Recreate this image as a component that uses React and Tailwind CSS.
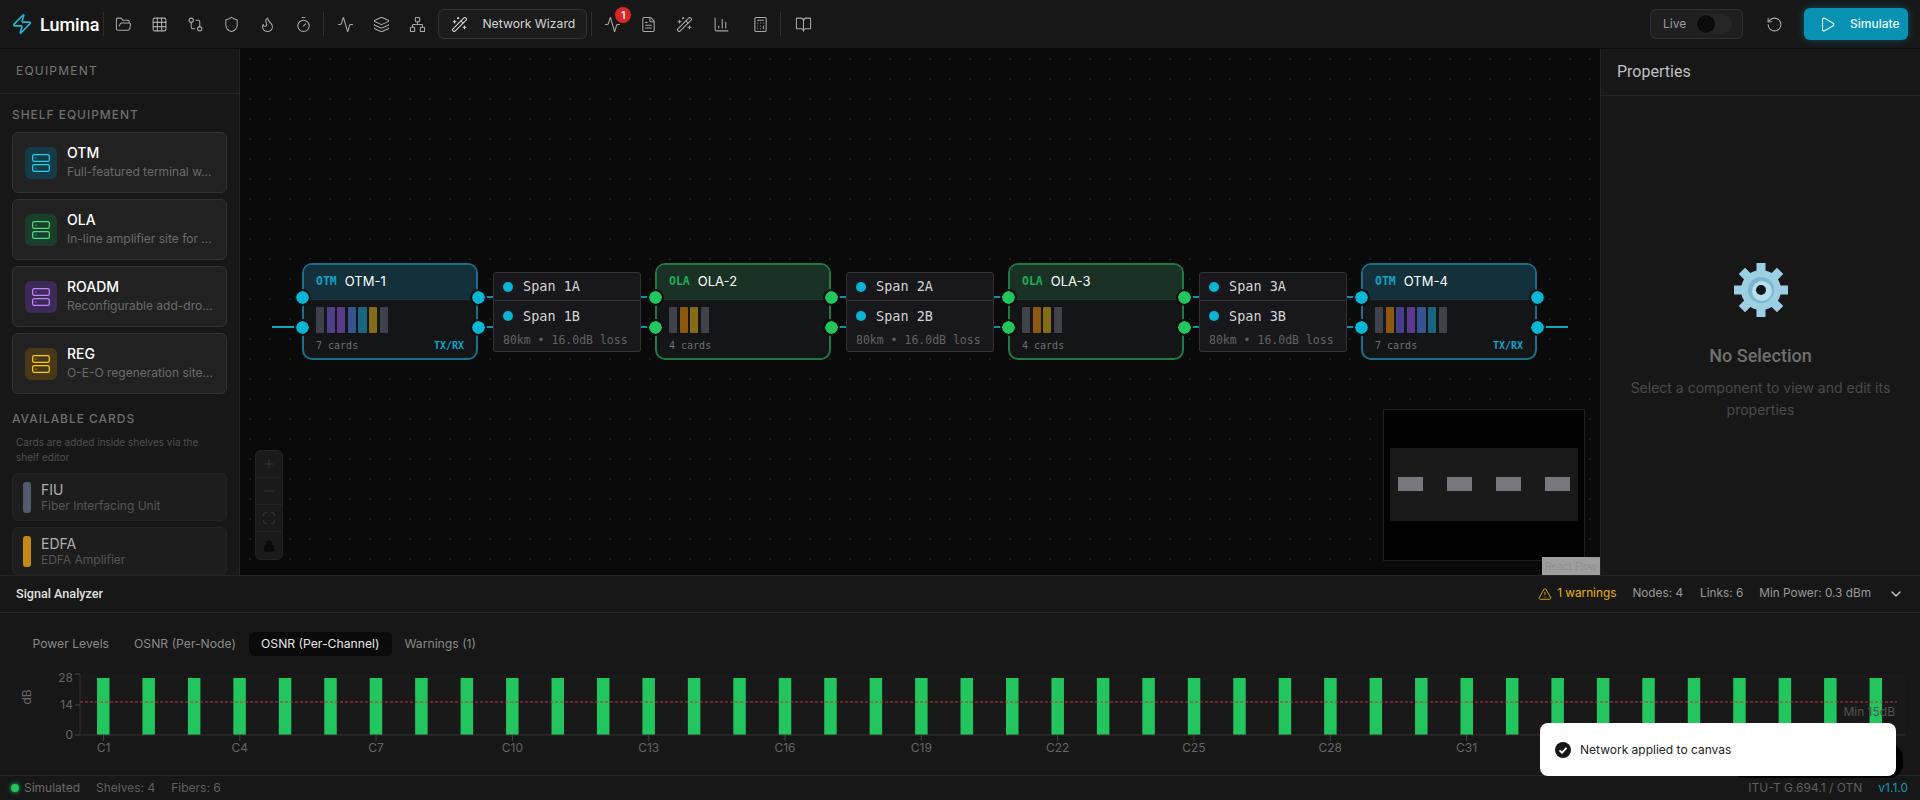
import {
  FolderOpen, Grid3x3, GitCompare, Shield, Flame, Timer, Activity, Layers, Network, WandSparkles,
  FileText, ChartColumn, Calculator, BookOpen, RotateCcw, Play, Server, TriangleAlert, ChevronDown,
  Plus, Minus, Maximize, Lock, Zap,
} from "lucide-react";

const head = { fontFamily: "Roboto, sans-serif" };
const mono = { fontFamily: "'DejaVu Sans Mono', monospace" };

const shelves = [
  { title: "OTM", desc: "Full-featured terminal w...", box: "bg-[#153b47]", icon: "text-[#22d3ee]" },
  { title: "OLA", desc: "In-line amplifier site for ...", box: "bg-[#1a3d2c]", icon: "text-[#4ade80]" },
  { title: "ROADM", desc: "Reconfigurable add-dro...", box: "bg-[#3d2a58]", icon: "text-[#c084fc]" },
  { title: "REG", desc: "O-E-O regeneration site...", box: "bg-[#483719]", icon: "text-[#facc15]" },
];

const GREY = "#474a55";
const nodes = [
  { x: 62, kind: "OTM", name: "OTM-1", cards: [GREY, "#5a479f", "#69409f", "#3e5da7", "#1a7690", "#9c7a17", GREY], foot: true },
  { x: 415, kind: "OLA", name: "OLA-2", cards: [GREY, "#a3650f", "#9c7a17", GREY] },
  { x: 768, kind: "OLA", name: "OLA-3", cards: [GREY, "#a3650f", "#9c7a17", GREY] },
  { x: 1121, kind: "OTM", name: "OTM-4", cards: [GREY, "#a3650f", "#4c47a3", "#69409f", "#3e5da7", "#1a7690", GREY], foot: true },
];

const spans = [
  { x: 253, a: "Span 1A", b: "Span 1B" },
  { x: 606, a: "Span 2A", b: "Span 2B" },
  { x: 959, a: "Span 3A", b: "Span 3B" },
];

const wireStarts = [244, 401, 597, 754, 950, 1107];

function TopIcon({ icon: Icon, x }) {
  return (
    <button className={`flex h-8 w-9 items-center justify-center text-[#a8a8a8] ${x || ""}`}>
      <Icon size={17} strokeWidth={1.5} />
    </button>
  );
}

function Sep({ m }) {
  return <div className={`h-6 w-px bg-[#2e2e2e] ${m}`} />;
}

function Header() {
  return (
    <header className="flex h-12 shrink-0 items-center bg-[#171717] pl-[11px] pr-[12px]">
      <Zap size={22} strokeWidth={1.75} className="text-[#22b8d6]" />
      <span className="ml-[7px] text-[18px] font-medium text-white" style={head}>Lumina</span>
      <Sep m="ml-[4px]" />
      <div className="ml-[1px] flex">
        <TopIcon icon={FolderOpen} />
        <TopIcon icon={Grid3x3} />
        <TopIcon icon={GitCompare} />
        <TopIcon icon={Shield} />
        <TopIcon icon={Flame} />
        <TopIcon icon={Timer} />
      </div>
      <Sep m="ml-[2px]" />
      <div className="ml-[3px] flex">
        <TopIcon icon={Activity} />
        <TopIcon icon={Layers} />
        <TopIcon icon={Network} />
      </div>
      <button className="ml-[3px] flex h-[30px] w-[149px] items-center gap-[14px] rounded-md border border-[#333] bg-[#1c1c1c] pl-[12px] text-[12.2px] text-[#d4d4d4]">
        <WandSparkles size={17} strokeWidth={1.5} />
        Network Wizard
      </button>
      <Sep m="ml-[4px]" />
      <div className="relative ml-[2px] flex">
        <TopIcon icon={Activity} />
        <span className="absolute left-[21px] top-[-1px] flex h-4 w-4 items-center justify-center rounded-full bg-[#dc2626] text-[10px] font-semibold text-white">1</span>
        <TopIcon icon={FileText} />
        <TopIcon icon={WandSparkles} />
        <TopIcon icon={ChartColumn} x="ml-[1px]" />
        <TopIcon icon={Calculator} x="ml-[3px]" />
      </div>
      <Sep m="ml-[2px]" />
      <TopIcon icon={BookOpen} x="ml-[4px]" />

      <div className="ml-auto flex h-[30px] w-[93px] items-center rounded-md border border-[#333] bg-[#1f1f1f] pl-[12px] text-[12px] text-[#9a9a9a]">
        Live
        <div className="ml-[10px] flex h-[20px] w-[36px] items-center rounded-full bg-[#262626] pl-[1px]">
          <div className="h-[18px] w-[18px] rounded-full bg-[#0b0b0b]" />
        </div>
      </div>
      <button className="ml-[15px] flex h-8 w-8 items-center justify-center text-[#a8a8a8]">
        <RotateCcw size={17} strokeWidth={1.5} />
      </button>
      <button className="ml-[14px] flex h-8 w-[104px] items-center gap-[14px] rounded-md bg-[#0891b2] pl-[15px] text-[12px] font-medium text-[#e6fbff] shadow-[0_0_8px_rgba(6,182,212,0.35)]">
        <Play size={17} strokeWidth={1.5} />
        Simulate
      </button>
    </header>
  );
}

function Sidebar() {
  return (
    <aside className="flex w-[240px] shrink-0 flex-col overflow-hidden border-r border-[#262626] bg-[#171717]">
      <div className="flex h-[45px] shrink-0 items-center border-b border-[#262626] px-4 text-[12px] tracking-[0.1em] text-[#777]">EQUIPMENT</div>
      <div className="px-3 pt-[12px]">
        <div className="text-[12px] font-medium tracking-[0.08em] text-[#6f6f6f]">SHELF EQUIPMENT</div>
        <div className="mt-[8px] flex flex-col gap-[6px]">
          {shelves.map((s) => (
            <div key={s.title} className="flex h-[61px] items-center gap-[10px] rounded-md border border-[#333] bg-[#212121] pl-[12px]">
              <div className={`flex h-8 w-8 shrink-0 items-center justify-center rounded-md ${s.box}`}>
                <Server size={20} strokeWidth={1.5} className={s.icon} />
              </div>
              <div className="min-w-0">
                <div className="text-[14px] font-medium leading-[18px] text-white">{s.title}</div>
                <div className="mt-[1px] whitespace-nowrap text-[12px] leading-[18px] text-[#6b6b6b]">{s.desc}</div>
              </div>
            </div>
          ))}
        </div>
        <div className="mt-[16px] text-[12px] font-medium tracking-[0.08em] text-[#6f6f6f]">AVAILABLE CARDS</div>
        <div className="mt-[7px] px-1 text-[10px] leading-[15px] text-[#4f4f4f]">Cards are added inside shelves via the shelf editor</div>
        <div className="mt-[8px] flex flex-col gap-[6px]">
          <div className="flex h-[48px] items-center gap-[10px] rounded-md border border-[#242424] bg-[#1d1d1d] pl-[10px]">
            <div className="h-[31px] w-[8px] rounded-[3px] bg-[#525c6d]" />
            <div>
              <div className="text-[14px] leading-[17px] text-[#b0b0b0]">FIU</div>
              <div className="text-[12px] leading-[16px] text-[#555]">Fiber Interfacing Unit</div>
            </div>
          </div>
          <div className="flex h-[48px] items-center gap-[10px] rounded-md border border-[#242424] bg-[#1d1d1d] pl-[10px]">
            <div className="h-[31px] w-[8px] rounded-[3px] bg-[#c48a10]" />
            <div>
              <div className="text-[14px] leading-[17px] text-[#b0b0b0]">EDFA</div>
              <div className="text-[12px] leading-[16px] text-[#555]">EDFA Amplifier</div>
            </div>
          </div>
        </div>
      </div>
    </aside>
  );
}

function Handle({ x, y, c }) {
  return (
    <div
      className={`absolute h-[13px] w-[13px] rounded-full outline-2 outline-[#0a0f10] ${c}`}
      style={{ left: x - 6.5, top: y - 6.5 }}
    />
  );
}

function Node({ n }) {
  const otm = n.kind === "OTM";
  return (
    <>
      <div
        className={`absolute flex h-[97px] w-[176px] flex-col overflow-hidden rounded-[10px] border-2 bg-[#141517] ${otm ? "border-[#1c6e8a]" : "border-[#1f7a45]"}`}
        style={{ left: n.x, top: 214 }}
      >
        <div className={`flex h-[35px] shrink-0 items-center gap-[8px] border-b pl-[12px] ${otm ? "border-[#1b3540] bg-[#13303b]" : "border-[#1e3a2a] bg-[#1a3226]"}`}>
          <span className={`text-[11.5px] font-bold ${otm ? "text-[#0ea5c9]" : "text-[#1fae55]"}`} style={mono}>{n.kind}</span>
          <span className="text-[13px] text-white">{n.name}</span>
        </div>
        <div className="flex gap-[2.3px] pl-[12px] pt-[7px] opacity-85">
          {n.cards.map((c, i) => (
            <div key={i} className="h-[26px] w-[8.3px] rounded-[1px]" style={{ backgroundColor: c }} />
          ))}
        </div>
        <div className="mt-[5px] flex items-center justify-between pl-[12px] pr-[12px] text-[10px]" style={mono}>
          <span className="text-[#6f6f6f]">{n.cards.length} cards</span>
          {n.foot && <span className="font-bold text-[#0ea5c9]">TX/RX</span>}
        </div>
      </div>
      {[248, 278].map((y) =>
        [n.x, n.x + 176].map((x) => (
          <Handle key={`${x}-${y}`} x={x} y={y} c={otm ? "bg-[#06b6d4]" : "bg-[#22c55e]"} />
        ))
      )}
    </>
  );
}

function SpanRow({ label }) {
  return (
    <div className="flex items-center gap-[10px] pl-[9px] text-[13.5px] text-[#d4d4d4]" style={mono}>
      <span className="h-[10px] w-[10px] rounded-full bg-[#06b6d4]" />
      {label}
    </div>
  );
}

function SpanBox({ s }) {
  return (
    <div className="absolute flex h-[80px] w-[148px] flex-col" style={{ left: s.x, top: 223 }}>
      <div className="flex h-[29px] shrink-0 items-center rounded-t-[3px] border border-[#333] bg-[#18181c]">
        <SpanRow label={s.a} />
      </div>
      <div className="flex-1 rounded-b-[3px] border border-t-0 border-[#333] bg-[#18181c] pt-[5px]">
        <SpanRow label={s.b} />
        <div className="mt-[6px] whitespace-nowrap pl-[9px] text-[11.5px] text-[#626262]" style={mono}>80km • 16.0dB loss</div>
      </div>
    </div>
  );
}

function Canvas() {
  return (
    <main className="relative flex-1 overflow-hidden bg-[#0a0a0a] bg-[radial-gradient(#1c1c1c_1px,transparent_1px)] bg-[size:20px_20px]">
      {wireStarts.map((x) =>
        [247, 277].map((y) => (
          <div key={`${x}-${y}`} className="absolute h-[2px] w-[9px] bg-[#0f90ac]" style={{ left: x, top: y }} />
        ))
      )}
      <div className="absolute left-[32px] top-[277px] h-[2px] w-[24px] bg-[#0fa5c4]" />
      <div className="absolute left-[1305px] top-[277px] h-[2px] w-[23px] bg-[#0fa5c4]" />
      {spans.map((s) => <SpanBox key={s.a} s={s} />)}
      {nodes.map((n) => <Node key={n.name} n={n} />)}

      <div className="absolute left-[15px] top-[401px] flex w-[28px] flex-col overflow-hidden rounded-md border border-[#232323] bg-[#1a1a1a] text-[#333]">
        {[Plus, Minus, Maximize].map((Icon, i) => (
          <div key={i} className="flex h-[27px] items-center justify-center border-b border-[#232323]">
            <Icon size={14} strokeWidth={2} />
          </div>
        ))}
        <div className="flex h-[27px] items-center justify-center text-[#0a0a0a]">
          <Lock size={12} strokeWidth={2.5} className="fill-current" />
        </div>
      </div>

      <div className="absolute right-[15px] top-[360px] flex h-[152px] w-[202px] flex-col justify-center border border-[#1f1f1f] bg-black px-[6px]">
        <div className="flex h-[73px] -translate-y-[1px] items-center justify-between bg-[#1a1a1a] px-[8px]">
          {[0, 1, 2, 3].map((i) => <div key={i} className="h-[14px] w-[25px] bg-[#77777d]" />)}
        </div>
      </div>
      <div className="absolute bottom-0 right-0 flex h-[18px] w-[58px] items-center justify-center bg-[#9e9e9e] text-[10px] text-[#8f8f8f]">React Flow</div>
    </main>
  );
}

function Gear() {
  return (
    <svg width="56" height="56" viewBox="0 0 56 56">
      {[0, 45, 90, 135, 180, 225, 270, 315].map((a) => (
        <rect key={a} x="23.5" y="1" width="9" height="12" fill="#9ccfe2" transform={`rotate(${a} 28 28)`} />
      ))}
      <circle cx="28" cy="28" r="20" fill="#9ccfe2" />
      <circle cx="28" cy="28" r="13" fill="#7db6cf" />
      <circle cx="29" cy="29" r="10" fill="#b5dfee" />
      <circle cx="28" cy="28" r="5" fill="#101418" />
    </svg>
  );
}

function Properties() {
  return (
    <aside className="flex w-[320px] shrink-0 flex-col border-l border-[#262626] bg-[#171717]">
      <div className="flex h-[47px] shrink-0 items-center border-b border-[#262626] pl-4 text-[16px] text-[#c0c0c0]" style={head}>Properties</div>
      <div className="flex flex-col items-center pt-[166px]">
        <Gear />
        <div className="mt-[24px] text-[18px] font-medium text-[#707070]" style={head}>No Selection</div>
        <div className="mt-[8px] w-[270px] text-center text-[14px] leading-[22px] text-[#4a4a4a]">Select a component to view and edit its properties</div>
      </div>
    </aside>
  );
}

function Chart() {
  const bars = Array.from({ length: 40 }, (_, i) => 97 + i * 45.45);
  return (
    <svg width="1920" height="110" viewBox="0 660 1920 110" className="mt-[4px] block" fontFamily="Inter, sans-serif">
      <rect x="80" y="674" width="1825" height="61" fill="#191919" />
      {bars.map((x) => <rect key={x} x={x} y="678" width="12.5" height="57" fill="#22c55e" />)}
      <line x1="80" y1="674" x2="80" y2="735" stroke="#333" />
      <line x1="80" y1="735" x2="1905" y2="735" stroke="#333" />
      {[[674, "28", 682], [705, "14", 709], [735, "0", 739]].map(([y, t, b]) => (
        <g key={t}>
          <line x1="75" y1={y} x2="80" y2={y} stroke="#444" />
          <text x="73" y={b} textAnchor="end" fontSize="12" fill="#666">{t}</text>
        </g>
      ))}
      <line x1="80" y1="702" x2="1897" y2="702" stroke="#c5303c" strokeWidth="1.2" strokeDasharray="3 2" />
      <text x="1895" y="716" textAnchor="end" fontSize="12" fill="#555">Min 15dB</text>
      <text x="0" y="0" fontSize="12" fill="#666" textAnchor="middle" transform="translate(31 697) rotate(-90)">dB</text>
      {Array.from({ length: 11 }, (_, i) => (
        <g key={i}>
          <line x1={103.5 + i * 136.3} y1="735" x2={103.5 + i * 136.3} y2="741" stroke="#444" />
          <text x={103.5 + i * 136.3} y="752" textAnchor="middle" fontSize="12" fill="#666">{`C${1 + i * 3}`}</text>
        </g>
      ))}
    </svg>
  );
}

function Analyzer() {
  const tabs = ["Power Levels", "OSNR (Per-Node)", "OSNR (Per-Channel)", "Warnings (1)"];
  return (
    <section className="h-[200px] shrink-0 border-t border-[#262626] bg-[#171717]">
      <div className="flex h-[37px] items-center border-b border-[#262626] pl-4 pr-[16px] text-[11.8px]">
        <span className="text-[12.6px] font-medium text-[#e0e0e0]" style={head}>Signal Analyzer</span>
        <TriangleAlert size={14} strokeWidth={1.5} className="ml-auto text-[#eab308]" />
        <span className="ml-[5px] text-[#eab308]">1 warnings</span>
        <span className="ml-[16px] text-[#9a9a9a]">Nodes: 4</span>
        <span className="ml-[17px] text-[#9a9a9a]">Links: 6</span>
        <span className="ml-[16px] text-[#9a9a9a]">Min Power: 0.3 dBm</span>
        <ChevronDown size={16} className="ml-[17px] text-[#c9c9c9]" />
      </div>
      <div className="flex items-center pl-[20px] pt-[19px]">
        {tabs.map((t, i) => (
          <div key={t} className={`flex h-[24px] items-center rounded-md px-[12.5px] text-[12.2px] ${i === 2 ? "bg-[#0a0a0a] text-[#e5e5e5]" : "text-[#8a8a8a]"}`}>{t}</div>
        ))}
      </div>
      <Chart />
    </section>
  );
}

function StatusBar() {
  return (
    <footer className="flex h-[25px] shrink-0 items-center border-t border-[#262626] bg-[#171717] pl-[11px] pr-[12px] text-[12px] text-[#5f5f5f]">
      <span className="h-[8px] w-[8px] rounded-full bg-[#22c55e] shadow-[0_0_4px_#22c55e]" />
      <span className="ml-[5px] text-[#6a6a6a]">Simulated</span>
      <span className="ml-[16px]">Shelves: 4</span>
      <span className="ml-[16px]">Fibers: 6</span>
      <span className="ml-auto">ITU-T G.694.1 / OTN</span>
      <span className="ml-[16px] text-[#0e9ab8]">v1.1.0</span>
    </footer>
  );
}

export default function App() {
  return (
    <div className="relative flex h-screen w-full flex-col overflow-hidden bg-[#171717]" style={{ fontFamily: "Inter, sans-serif" }}>
      <Header />
      <div className="flex min-h-0 flex-1 border-t border-[#0a0a0a]">
        <Sidebar />
        <Canvas />
        <Properties />
      </div>
      <Analyzer />
      <StatusBar />

      <div className="absolute bottom-[22px] right-[17px] h-[34px] w-[173px] rounded-[14px] bg-black" />
      <div className="absolute bottom-[24px] right-[24px] flex h-[53px] w-[356px] items-center gap-[9px] rounded-lg bg-white pl-[15px] text-[12px] text-[#222]">
        <svg width="16" height="16" viewBox="0 0 16 16">
          <circle cx="8" cy="8" r="8" fill="#171717" />
          <path d="M4.5 8.3 7 10.7 11.5 5.8" fill="none" stroke="#fff" strokeWidth="1.8" />
        </svg>
        Network applied to canvas
      </div>
    </div>
  );
}
